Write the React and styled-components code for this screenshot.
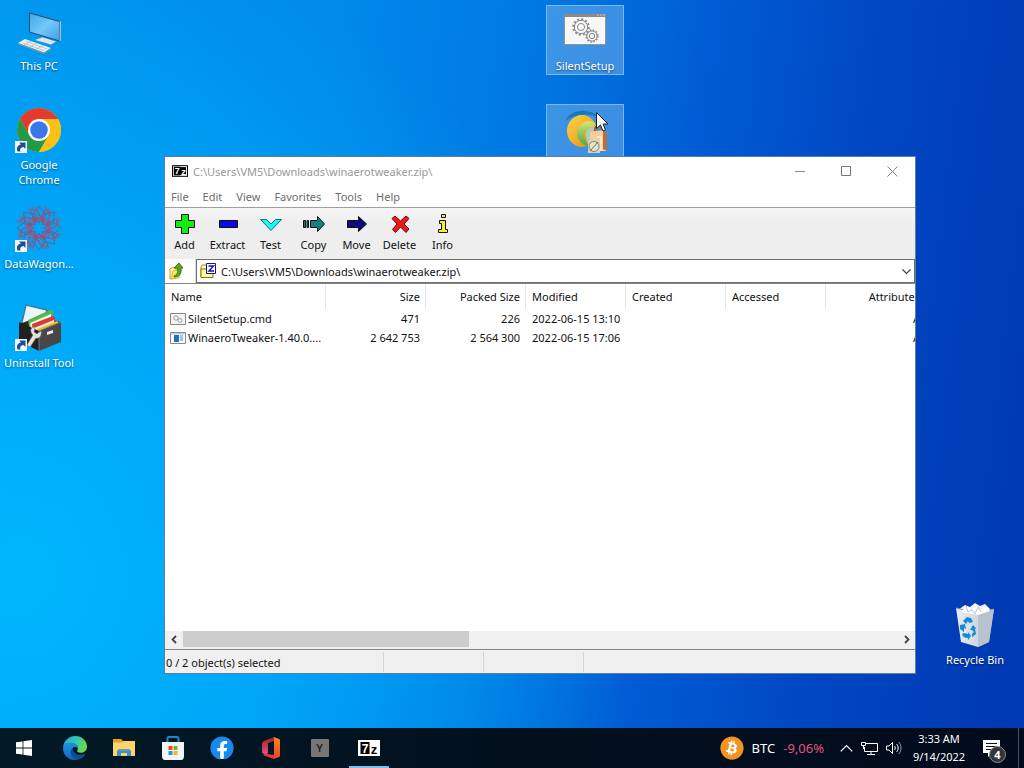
import React from 'react';
import styled, { createGlobalStyle } from 'styled-components';
import { FaFacebook } from 'react-icons/fa';
import { FaBitcoin } from 'react-icons/fa6';

const GlobalStyle = createGlobalStyle`
  * { box-sizing: border-box; }
  html, body, #root { height: 100%; margin: 0; }
  body { overflow: hidden; font-family: "Noto Sans", "Open Sans", sans-serif; font-size: 11px; line-height: 15px; }
  button, input { font: inherit; color: inherit; margin: 0; padding: 0; border: 0; background: none; }
  svg { display: block; flex: none; }
`;

const Screen = styled.div`
  height: 100vh;
  display: flex;
  flex-direction: column;
  background:
    radial-gradient(ellipse 60% 85% at 2% 75%, rgba(0, 186, 255, 0.9) 0%, rgba(0, 180, 255, 0.6) 50%, rgba(0, 160, 250, 0) 100%),
    linear-gradient(97deg, #0094ec 0%, #008aea 30%, #0076e0 50%, #005cd4 64%, #0046c2 80%, #0038b0 100%);
`;

const Desktop = styled.main`
  position: relative;
  flex: 1;
  min-height: 0;
`;

const IconColumn = styled.div`
  position: absolute;
  top: ${(p) => p.$top || 'auto'};
  left: ${(p) => p.$left || 'auto'};
  right: ${(p) => p.$right || 'auto'};
  bottom: ${(p) => p.$bottom || 'auto'};
  display: grid;
  grid-auto-rows: minmax(${(p) => (p.$single ? '70px' : '99px')}, auto);
  align-items: start;
`;

const DesktopButton = styled.button`
  width: 78px;
  min-height: 70px;
  padding-top: 1px;
  display: flex;
  flex-direction: column;
  align-items: center;
  gap: 3px;
  border: 1px solid ${(p) => (p.$selected ? '#7ab8f2' : 'transparent')};
  background: ${(p) => (p.$selected ? 'rgba(120, 180, 235, 0.5)' : 'none')};
  color: #fff;
  text-shadow: 0 1px 2px rgba(0, 0, 0, 0.5);
`;

const Cursor = styled.svg`
  position: absolute;
  left: 595px;
  top: 111px;
`;

const Window = styled.section`
  position: absolute;
  left: 164px;
  right: 108px;
  top: 156px;
  bottom: 54px;
  display: flex;
  flex-direction: column;
  background: #fff;
  border: 1px solid #5d7f9c;
  color: #111;
`;

const TitleBar = styled.header`
  display: flex;
  align-items: center;
  height: 30px;
  padding: 0 0 2px 7px;
  color: #999;
`;

const Title = styled.h1`
  flex: 1;
  margin: 0 0 0 5px;
  font-size: 11px;
  font-weight: 400;
`;

const CaptionButton = styled.button`
  width: 46px;
  height: 28px;
  display: grid;
  place-items: center;
`;

const MenuBar = styled.nav`
  display: flex;
  height: 21px;
  padding: 0 0 2px 6px;
  gap: 14px;
  color: #6d6d6d;
  border-bottom: 1px solid #a0a0a0;
`;

const Toolbar = styled.div`
  display: flex;
  height: 51px;
  padding: 6px 0;
  background: linear-gradient(#f6f6f6, #eeeeee 30%);
`;

const ToolButton = styled.button`
  width: 43px;
  margin-left: ${(p) => (p.$first ? '-2px' : '0')};
  display: flex;
  flex-direction: column;
  align-items: center;
  gap: 3px;
  line-height: 16px;
`;

const AddressRow = styled.div`
  display: flex;
  height: 24px;
`;

const UpButton = styled.button`
  width: 31px;
  padding-left: 4px;
  border-right: 1px solid #ddd;
`;

const Combo = styled.div`
  flex: 1;
  display: flex;
  align-items: center;
  padding-left: 3px;
  gap: 5px;
  border: 1px solid #6e6e6e;
`;

const PathInput = styled.input`
  flex: 1;
  min-width: 0;
  outline: 0;
`;

const DropButton = styled.button`
  width: 15px;
  height: 20px;
  display: grid;
  place-items: center;
`;

const FileList = styled.div`
  flex: 1;
  min-height: 0;
  display: flex;
  flex-direction: column;
  border-top: 1px solid #82868a;
  border-bottom: 1px solid #82868a;
`;

const ListView = styled.div`
  flex: 1;
  overflow: hidden;
`;

const Table = styled.table`
  width: 761px;
  table-layout: fixed;
  border-collapse: separate;
  border-spacing: 0;
`;

const HeadCell = styled.th`
  width: ${(p) => p.$width};
  height: 25px;
  padding: 0 5px 0 6px;
  font-weight: 400;
  text-align: ${(p) => p.$align};
  border-right: 1px solid #e5e5e5;
`;

const Cell = styled.td`
  height: 19px;
  padding: 0 6px;
  white-space: nowrap;
  text-align: ${(p) => p.$align};
  &:first-child { padding: 0 0 0 5px; }
`;

const FileName = styled.span`
  display: flex;
  align-items: center;
  gap: 2px;
`;

const ScrollBar = styled.div`
  display: flex;
  height: 18px;
  padding-bottom: 2px;
  background: #f0f0f0;
`;

const ScrollArrow = styled.button`
  width: 18px;
  display: grid;
  place-items: center;
`;

const ScrollTrack = styled.div`
  flex: 1;
`;

const ScrollThumb = styled.div`
  width: 40%;
  height: 16px;
  background: #cdcdcd;
`;

const StatusBar = styled.footer`
  display: flex;
  height: 23px;
  padding: 2px 0 1px;
  background: #f0f0f0;
`;

const StatusCell = styled.div`
  width: ${(p) => p.$width};
  padding: 3px 0 0 1px;
  border-right: 1px solid #d4d4d4;
`;

const Taskbar = styled.footer`
  display: flex;
  height: 40px;
  background: linear-gradient(90deg, #021a26, #02101e 50%, #020b1c);
  color: #fff;
`;

const TaskButton = styled.button`
  width: ${(p) => (p.$start ? '50px' : '49px')};
  display: grid;
  place-items: center;
  padding-right: ${(p) => (p.$start ? '2px' : '0')};
  background: ${(p) => (p.$active ? 'linear-gradient(#84bdea, #84bdea) center bottom / 40px 2px no-repeat' : 'none')};
`;

const LetterTile = styled.span`
  width: 18px;
  height: 18px;
  border-radius: 1px;
  background: #777675;
  color: #26221f;
  font-size: 11px;
  font-weight: 600;
  line-height: 18px;
`;

const Tray = styled.div`
  margin-left: auto;
  display: flex;
  align-items: center;
`;

const Ticker = styled.button`
  display: flex;
  align-items: center;
  gap: 8px;
  font-size: 13px;
`;

const Change = styled.span`
  color: #e2557c;
`;

const TrayIcons = styled.div`
  display: flex;
  align-items: center;
  gap: 8px;
  padding: 0 10px 0 16px;
`;

const TrayButton = styled.button`
  display: grid;
`;

const Clock = styled.button`
  width: 54px;
  font-size: 11px;
  line-height: 18px;
  white-space: nowrap;
`;

const Notifications = styled.button`
  position: relative;
  width: 53px;
  height: 40px;
  padding: 2px 0 0 17px;
  border-right: 1px solid #35566e;
  margin-right: 5px;
`;

const Badge = styled.span`
  position: absolute;
  left: 23px;
  top: 18px;
  width: 17px;
  height: 17px;
  border: 1px solid #8b9096;
  border-radius: 50%;
  background: #31363c;
  font-weight: 700;
  line-height: 15px;
`;

const Shortcut = () => (
  <g>
    <path d="M0 35h12v12H0z" fill="#f5f8fb" />
    <path d="M2.500 45.500c-1.500-4 .5-6.500 3.500-7L4 36.500h6.500V43l-2-2c-3 .5-4 2-3 4.500z" fill="#1d4d94" />
  </g>
);

const Icon48 = ({ children }) => <svg width="48" height="48" viewBox="0 0 48 48" aria-hidden="true">{children}</svg>;

const ThisPcIcon = () => (
  <Icon48>
    <defs>
      <linearGradient id="pc" x1="0" y1="0" x2="1" y2="1">
        <stop offset="0" stopColor="#3fa5ec" /><stop offset=".5" stopColor="#74c8fa" /><stop offset="1" stopColor="#3a9fea" />
      </linearGradient>
    </defs>
    <path d="M14.500 6L44.500 14.500V34L14.500 25z" fill="url(#pc)" stroke="#2c4a60" strokeWidth="1" />
    <path d="M45.200 14.500V34" stroke="#d5e3ec" />
    <path d="M27 30l8 2.500v3l-8-2z" fill="#9fb2be" />
    <path d="M20 33l7-2.500 14 4-5 3z" fill="#dfe6ea" />
    <path d="M3 36l7-4 26 9-7 4.500z" fill="#eef1f3" />
    <path d="M3 36l26 9.500 7-4.500v1.200L29 47 3 37.200z" fill="#8196a5" />
    <path d="M8 36.200l21 7.300M11 34.500l21 7.400M9 38l7-4M15 40l7-4M21 42.300l7-4" stroke="#a9b5bd" strokeWidth=".7" />
  </Icon48>
);

const ChromeIcon = () => (
  <Icon48>
    <circle cx="24" cy="24" r="22" fill="#fbc116" />
    <path d="M24 13h19a22 22 0 0 0-38.100 0L14.500 29.500z" fill="#e33b2e" />
    <path d="M4.950 13L14.500 29.500A11 11 0 0 0 33.500 29.500L24 46A22 22 0 0 1 4.950 13z" fill="#229a4a" />
    <path d="M43.050 13H24a11 11 0 0 1 9.500 16.500L24 46A22 22 0 0 0 43.050 13z" fill="#fbc116" />
    <circle cx="24" cy="24" r="11" fill="#fff" />
    <circle cx="24" cy="24" r="8.800" fill="#3b78e7" />
    <Shortcut />
  </Icon48>
);

const DataWagonIcon = () => (
  <Icon48>
    {[0, 45, 90, 135, 180, 225, 270, 315].map((a) => (
      <g key={a} transform={`rotate(${a} 24 23)`} fill="none" strokeWidth="1">
        <path d="M24 18l-7-8 7-9 7 9z" stroke="#55659f" />
        <path d="M19 15l-4-10h6l8 11M21 3l7 13" stroke="#965079" />
        <path d="M17 16h14l-7-6z" stroke="#b04a70" />
        <path d="M15 5l-2-2h8l3 6M29 4h5l-3 8" stroke="#6574a8" />
      </g>
    ))}
    <Shortcut />
  </Icon48>
);

const UninstallIcon = () => (
  <Icon48>
    <path d="M11 1l21 5-6 24L6 22z" fill="#eaf4fa" stroke="#377da2" strokeWidth="1.500" />
    <path d="M4 20l20-7 22 5-22 9z" fill="#292929" />
    <path d="M13 16l22-10 3 1v14L15 28z" fill="#54b948" />
    <path d="M15 19l21-9v12L17 30z" fill="#f3f6df" />
    <path d="M17 20l21-8 2 2v11L18 30z" fill="#d83a36" />
    <path d="M19 24l20-8v10L20 33z" fill="#f7efe7" />
    <path d="M22 25l20-8 2 2v9L24 34z" fill="#efbc28" />
    <path d="M4 18l20 9v20L4 37z" fill="#202020" />
    <path d="M24 27l22-9v20L24 47z" fill="#484646" />
    <path d="M24 27l22-9M24 27v20" stroke="#767373" />
    <path d="M32 28l6-2v3l-6 2z" fill="#ececec" />
    <path d="M12 41l6-10c-4-4-2-8 2-8l-1 5 3 2 4-3c1 5-2 8-5 7l-6 9z" fill="#e6e4df" stroke="#85817c" strokeWidth=".6" />
    <Shortcut />
  </Icon48>
);

const Gear = ({ x, y, r, teeth = 12 }) => (
  <g transform={`translate(${x} ${y})`} fill="none" stroke="#85898b">
    <circle r={r * 0.78} strokeWidth="1" />
    <circle r={r * 0.42} strokeWidth="1" />
    <circle r={r * 0.92} strokeWidth={r * 0.22} strokeDasharray={`${(r * 0.92 * Math.PI) / teeth} ${(r * 0.92 * Math.PI) / teeth}`} />
  </g>
);

const SetupIcon = () => (
  <Icon48>
    <path d="M3.500 7.500h41v30h-41z" fill="#f8f8f8" stroke="#96938d" />
    <path d="M3 7h42v3H3z" fill="#918980" />
    <path d="M36 8h2M39 8h2M42 8h2" stroke="#d4c9bc" />
    <Gear x={20} y={20} r={8.5} />
    <Gear x={31} y={29} r={6.5} />
  </Icon48>
);

const TweakerIcon = () => (
  <Icon48>
    <defs>
      <linearGradient id="tw" x1="0" y1="0" x2="1" y2="1">
        <stop offset="0" stopColor="#ffd548" /><stop offset=".6" stopColor="#efab22" /><stop offset="1" stopColor="#b98a16" />
      </linearGradient>
      <linearGradient id="tg" x1="0" y1="0" x2="0" y2="1">
        <stop offset="0" stopColor="#d9e56c" /><stop offset="1" stopColor="#47a552" />
      </linearGradient>
    </defs>
    <path d="M4 15C10 3 28 1 40 12 28 7 16 7 4 15z" fill="#127bb8" />
    <ellipse cx="21" cy="25" rx="15" ry="16" fill="url(#tw)" />
    <path d="M34 17c-9-5-19 2-18 12 1 6 6 10 12 11-5-6-6-12-3-16 2-2 5-3 8-2z" fill="url(#tg)" />
    <path d="M33 22c-6-2-11 4-6 15l7-3z" fill="#a9cfc0" />
    <path d="M29 26l13-2 3 3v18H29z" fill="#f4cf9b" />
    <path d="M42 24l4 3v18l-4-2z" fill="#b66f3f" />
    <path d="M34 25c0-6 7-8 8-1" fill="none" stroke="#c4502a" strokeWidth="2.500" />
    <path d="M27 34h12v13H27z" fill="#d7d1b6" />
    <circle cx="33" cy="40.500" r="5" fill="#e6e2cf" stroke="#8b866f" />
    <path d="M29 45l8-9" stroke="#6b705f" />
    <path d="M36 31h4v14" fill="none" stroke="#fff2d7" strokeWidth="1.500" />
  </Icon48>
);

const BinIcon = () => (
  <Icon48>
    <defs>
      <linearGradient id="bin" x1="0" y1="0" x2="1" y2="0">
        <stop offset="0" stopColor="#e8eef2" /><stop offset=".6" stopColor="#cdd7de" /><stop offset="1" stopColor="#8fa0b3" />
      </linearGradient>
    </defs>
    <path d="M7 9l7-5 5 2 5-4 5 3 5-2 8 8-3 6H9z" fill="#f0f3f5" />
    <path d="M5 7l22 5 16-4-5 33-11 5-17-5z" fill="url(#bin)" />
    <path d="M27 12l16-4-5 33-11 5z" fill="#b8c3cd" />
    <path d="M5 7l22 5 16-4" fill="none" stroke="#8698ab" />
    <path d="M10 11l5-6 6 4 4-5 5 5 6-3 3 4-12 4z" fill="#fff" />
    <path d="M15 5l2 6 4-2 3 4 3-7 3 5" fill="none" stroke="#b9c2cc" />
    <g fill="#1688d8">
      <path d="M12 20l4-4 4 1 2 4-4 1-1-2-2 3z" />
      <path d="M9 24l5-1 1 5-2-1v4l-4-3z" />
      <path d="M11 33l2-1 4 1v-2l3 4-3 4v-2c-3 0-5-1-6-4z" />
      <path d="M21 33l2-2-2-2h-2l3-5 3 3-1 1 1 5-4 3z" />
    </g>
  </Icon48>
);

const SevenZip = ({ large }) => (
  <svg width={large ? 22 : 16} height={large ? 16 : 12} viewBox="0 0 22 16" aria-label="7z">
    <rect width="22" height="16" fill={large ? '#fff' : '#000'} />
    <rect x="2" y="2" width="18" height="12" fill={large ? '#fff' : '#000'} stroke={large ? 'none' : '#fff'} strokeWidth="1.300" />
    <rect x="2.500" y="2" width="9" height="12" fill="#000" />
    <text x="7" y="12.500" textAnchor="middle" fontFamily="Liberation Sans" fontWeight="700" fontSize="12" fill="#fff">7</text>
    <text x="16" y="13.500" textAnchor="middle" fontFamily="Liberation Sans" fontWeight="700" fontSize="13" fill={large ? '#000' : '#fff'}>z</text>
  </svg>
);

const toolShapes = {
  Add: <path d="M8.500.5h7v6h6v7h-6v6h-7v-6h-6v-7h6z" fill="#12ee12" />,
  Extract: <path d="M3.500 6.500h18v7h-18z" fill="#0808ee" />,
  Test: <path d="M1.500 5.500h6L12 10l4.500-4.500h6L12 16.500z" fill="#20f4f4" stroke="#067878" />,
  Copy: <g fill="#168080"><path d="M1.500 6.500h2v7h-2zM5 6.500h1.500v7H5zM8.500 6.500h7v-4l7 7.500-7 7.500v-4h-7z" /></g>,
  Move: <path d="M2.500 6.500h11v-4l8 7.500-8 7.500v-4h-11z" fill="#100a80" />,
  Delete: <path d="M4 4.500l3-2.500 5.500 5L18 2l3 2.500-5 5.500 5 5-3 3.500-5.500-5.500-5 5.500-3-3 4.500-5.500z" fill="#f01818" stroke="#610b0b" />,
  Info: <path d="M10.500.500h4v3h-4zM8.500 6.500h6v9h2v3h-9v-3h3v-6h-2z" fill="#f4f424" />,
};

const ToolIcon = ({ name }) => (
  <svg width="24" height="20" viewBox="0 0 24 20" stroke="#111" aria-hidden="true">{toolShapes[name]}</svg>
);

const UpIcon = () => (
  <svg width="16" height="18" viewBox="0 0 16 18" aria-hidden="true">
    <path d="M1 7l4-2 2 2v9l-6 1z" fill="#fff2a2" stroke="#c8a72a" />
    <path d="M2 17l2-8 8-2-2 9z" fill="#ffe45f" stroke="#d2ab28" strokeWidth=".7" />
    <path d="M5 14c4-1 4-5 3-8H5l5-5 4 5h-2c1 6-2 9-7 9z" fill="#56a71b" stroke="#286414" strokeWidth=".8" />
  </svg>
);

const ArchiveIcon = () => (
  <svg width="16" height="16" viewBox="0 0 16 16" aria-hidden="true">
    <path d="M1 4l1-2h4l1 2v10H1z" fill="#ffffb2" stroke="#a18d22" />
    <path d="M1 6h12v8.500H1z" fill="#ffff9b" stroke="#7d731d" />
    <path d="M6.500.500h9v10h-9z" fill="#fff" stroke="#15159a" />
    <path d="M8.500 3h5L9 8h5" fill="none" stroke="#1515b6" strokeWidth="1.400" />
  </svg>
);

const CmdFileIcon = () => (
  <svg width="16" height="14" viewBox="0 0 16 14" aria-hidden="true">
    <path d="M.5 1.500h15v11H.5z" fill="#f4f4f4" stroke="#878787" />
    <circle cx="6" cy="6" r="2.200" fill="none" stroke="#a0a0a0" /><circle cx="10" cy="8.500" r="2" fill="none" stroke="#a0a0a0" />
  </svg>
);

const ExeFileIcon = () => (
  <svg width="16" height="14" viewBox="0 0 16 14" aria-hidden="true">
    <path d="M.5 1.500h15v11H.5z" fill="#fff" stroke="#838994" />
    <path d="M1 2h14v1.500H1z" fill="#c4cbd2" />
    <path d="M4 4h5v7H4z" fill="#1d71bd" /><path d="M10 5h3M10 7h3M10 9h3" stroke="#4785b9" />
  </svg>
);

const Chevron = ({ dir, size = 9, color = '#444', width = 1.2 }) => {
  const d = { left: 'M6 1L2.500 4.500 6 8', right: 'M3 1l3.500 3.500L3 8', down: 'M.5 2.500l4 4 4-4', up: 'M.5 6.500l4-4 4 4' }[dir];
  return <svg width={size} height={size} viewBox="0 0 9 9" fill="none" stroke={color} strokeWidth={width} aria-hidden="true"><path d={d} /></svg>;
};

const StartIcon = () => (
  <svg width="16" height="16" viewBox="0 0 16 16" fill="#fff" aria-hidden="true">
    <path d="M0 2.300L6.600 1.400v6.200H0zM7.400 1.300L16 0v7.600H7.400zM0 8.400h6.600v6.200L0 13.700zM7.400 8.400H16V16l-8.600-1.200z" />
  </svg>
);

const EdgeIcon = () => (
  <svg width="24" height="24" viewBox="0 0 24 24" aria-hidden="true">
    <defs>
      <linearGradient id="e1" x1="0" y1="0" x2="1" y2=".4"><stop offset="0" stopColor="#22a7dc" /><stop offset=".55" stopColor="#35c6b4" /><stop offset="1" stopColor="#68d84b" /></linearGradient>
      <linearGradient id="e2" x1="0" y1="0" x2="0" y2="1"><stop offset="0" stopColor="#1b94df" /><stop offset="1" stopColor="#1265c0" /></linearGradient>
    </defs>
    <path d="M.2 11C.8 5 6 .1 12.300.1 19 .1 24 5 24 10.500c0 4-3 6.300-6.300 6.300-2.900 0-4.200-1.300-3.300-2.600 2-3-1-7-5.200-7C5 7.200 1.400 8.800.2 11z" fill="url(#e1)" />
    <path d="M.1 12C.3 7.500 4.500 6.500 8.500 6.800c4 .2 7 3 6.500 6-1-2-4-2.500-5.500-.6C7 15.500 9 21 15 23.500 6.500 25.500-.3 19.500.1 12z" fill="url(#e2)" />
    <path d="M9.300 12.200C6 16 8 22 13.500 23.900c3.900-.2 7.500-2.500 8.900-5.600.2-.5-.2-.7-.6-.5-5 2.300-10.500.6-11.600-3.200-.3-1-.2-1.800-.9-2.400z" fill="#124b94" />
  </svg>
);

const ExplorerIcon = () => (
  <svg width="22" height="18" viewBox="0 0 22 18" aria-hidden="true">
    <path d="M0 0h8l2 2h12v4H0z" fill="#dfa227" />
    <path d="M0 3.500h9L11 2h11v15H0z" fill="#fbd465" />
    <path d="M4 17v-5l2-2h10l2 2v5h-4v-3H8v3z" fill="#438ec4" />
    <path d="M4 12l2-2h10l2 2z" fill="#5a9fce" />
  </svg>
);

const StoreIcon = () => (
  <svg width="24" height="24" viewBox="0 0 24 24" aria-hidden="true">
    <path d="M6.500 7V2.500c0-1 .5-1.500 1.500-1.500h8c1 0 1.500.5 1.500 1.500V7" fill="none" stroke="#2384c6" strokeWidth="2" />
    <path d="M1 6h22v14c0 2.500-1 4-3 4H4c-2 0-3-1.500-3-4z" fill="#f2f5f7" />
    <path d="M7.500 10h4v4h-4z" fill="#e84d29" /><path d="M12.500 10h4v4h-4z" fill="#76b82a" />
    <path d="M7.500 15h4v4h-4z" fill="#229bd5" /><path d="M12.500 15h4v4h-4z" fill="#f7b719" />
  </svg>
);

const FacebookIcon = () => (
  <svg width="24" height="24" viewBox="0 0 24 24" aria-hidden="true">
    <circle cx="12" cy="12" r="11" fill="#fff" />
    <FaFacebook x="0" y="0" size={24} color="#168af0" />
  </svg>
);

const OfficeIcon = () => (
  <svg width="20" height="22" viewBox="0 0 20 22" aria-hidden="true">
    <defs>
      <linearGradient id="of" x1="0" y1="0" x2="0" y2="1"><stop offset="0" stopColor="#a41f1d" /><stop offset="1" stopColor="#e3508e" /></linearGradient>
      <linearGradient id="og" x1="0" y1="0" x2="0" y2="1"><stop offset="0" stopColor="#ff871f" /><stop offset="1" stopColor="#e64422" /></linearGradient>
    </defs>
    <path d="M13 0L3 4C2 4.500 1 5.500 1 7v9l4 1.500L7 16V6l6-2z" fill="url(#of)" />
    <path d="M13 0l5 2c.7.3 1 .8 1 1.500v15c0 .8-.3 1.200-1 1.500l-5 2z" fill="url(#og)" />
    <path d="M2 17l4 0 7 1v4L3 18.500z" fill="#dc3d37" />
  </svg>
);

const NetworkIcon = () => (
  <svg width="17" height="15" viewBox="0 0 17 15" fill="none" stroke="#fff" aria-hidden="true">
    <path d="M5 2.500h11.500v8H3.500V6M10 10.500v3M6 13.500h8M.5 1.500h4v3h-4zM2.500 5v3" />
  </svg>
);

const VolumeIcon = () => (
  <svg width="16" height="14" viewBox="0 0 16 14" fill="none" stroke="#fff" aria-hidden="true">
    <path d="M.5 5h2.500l3.500-3.500v11L3 9H.5z" /><path d="M8.500 5c1 1 1 3 0 4" /><path d="M10.500 3c2.200 2 2.200 6 0 8" />
    <path d="M12.800 1c3 3.300 3 8.700 0 12" stroke="#8e98a4" />
  </svg>
);

const columns = [
  ['Name', '161px', 'left'], ['Size', '100px', 'right'], ['Packed Size', '100px', 'right'], ['Modified', '100px', 'left'],
  ['Created', '100px', 'left'], ['Accessed', '100px', 'left'], ['Attributes', '100px', 'right'],
];

const files = [
  { icon: <CmdFileIcon />, cells: ['SilentSetup.cmd', '471', '226', '2022-06-15 13:10', '', '', 'A'] },
  { icon: <ExeFileIcon />, cells: ['WinaeroTweaker-1.40.0....', '2 642 753', '2 564 300', '2022-06-15 17:06', '', '', 'A'] },
];

const path = 'C:\\Users\\VM5\\Downloads\\winaerotweaker.zip\\';

const DesktopIcon = ({ icon, label, selected, name }) => (
  <DesktopButton type="button" $selected={selected} aria-label={name}>
    {icon}
    {label && <span>{label}</span>}
  </DesktopButton>
);

function ArchiveWindow() {
  return (
    <Window>
      <TitleBar>
        <SevenZip />
        <Title>{path}</Title>
        <CaptionButton type="button" aria-label="Minimize">
          <svg width="10" height="10" stroke="#888"><path d="M0 5.500h10" /></svg>
        </CaptionButton>
        <CaptionButton type="button" aria-label="Maximize">
          <svg width="10" height="10" fill="none" stroke="#777"><path d="M.5.5h9v9h-9z" /></svg>
        </CaptionButton>
        <CaptionButton type="button" aria-label="Close">
          <svg width="11" height="11" stroke="#888"><path d="M.5.5l10 10M10.500.5l-10 10" /></svg>
        </CaptionButton>
      </TitleBar>
      <MenuBar>
        {['File', 'Edit', 'View', 'Favorites', 'Tools', 'Help'].map((m) => <button type="button" key={m}>{m}</button>)}
      </MenuBar>
      <Toolbar>
        {Object.keys(toolShapes).map((name, i) => (
          <ToolButton type="button" key={name} $first={i === 0}><ToolIcon name={name} />{name}</ToolButton>
        ))}
      </Toolbar>
      <AddressRow>
        <UpButton type="button" aria-label="Up one level"><UpIcon /></UpButton>
        <Combo>
          <ArchiveIcon />
          <PathInput aria-label="Address" defaultValue={path} />
          <DropButton type="button" aria-label="Show addresses"><Chevron dir="down" /></DropButton>
        </Combo>
      </AddressRow>
      <FileList>
        <ListView>
          <Table>
            <thead>
              <tr>{columns.map(([label, width, align]) => <HeadCell key={label} $width={width} $align={align}>{label}</HeadCell>)}</tr>
            </thead>
            <tbody>
              {files.map((f) => (
                <tr key={f.cells[0]}>
                  {f.cells.map((c, i) => (
                    <Cell key={columns[i][0]} $align={columns[i][2]}>{i === 0 ? <FileName>{f.icon}{c}</FileName> : c}</Cell>
                  ))}
                </tr>
              ))}
            </tbody>
          </Table>
        </ListView>
        <ScrollBar>
          <ScrollArrow type="button" aria-label="Scroll left"><Chevron dir="left" width={1.8} /></ScrollArrow>
          <ScrollTrack><ScrollThumb /></ScrollTrack>
          <ScrollArrow type="button" aria-label="Scroll right"><Chevron dir="right" width={1.8} /></ScrollArrow>
        </ScrollBar>
      </FileList>
      <StatusBar>
        <StatusCell $width="219px">0 / 2 object(s) selected</StatusCell>
        <StatusCell $width="100px" />
        <StatusCell $width="100px" />
      </StatusBar>
    </Window>
  );
}

export default function App() {
  return (
    <Screen>
      <GlobalStyle />
      <Desktop>
        <IconColumn $top="5px" $left="0">
          <DesktopIcon icon={<ThisPcIcon />} label="This PC" />
          <DesktopIcon icon={<ChromeIcon />} label="Google Chrome" />
          <DesktopIcon icon={<DataWagonIcon />} label="DataWagon..." />
          <DesktopIcon icon={<UninstallIcon />} label="Uninstall Tool" />
        </IconColumn>
        <IconColumn $top="5px" $left="546px">
          <DesktopIcon icon={<SetupIcon />} label="SilentSetup" selected />
          <DesktopIcon icon={<TweakerIcon />} name="WinaeroTweaker" selected />
        </IconColumn>
        <IconColumn $right="10px" $bottom="59px" $single>
          <DesktopIcon icon={<BinIcon />} label="Recycle Bin" />
        </IconColumn>
        <ArchiveWindow />
        <Cursor width="14" height="22" viewBox="0 0 14 22" aria-hidden="true">
          <path d="M1.500 1.500v16l4-3.500 2.500 6 2.500-1-2.500-6H13z" fill="#fff" stroke="#222" />
        </Cursor>
      </Desktop>
      <Taskbar>
        <TaskButton type="button" $start aria-label="Start"><StartIcon /></TaskButton>
        <TaskButton type="button" aria-label="Edge"><EdgeIcon /></TaskButton>
        <TaskButton type="button" aria-label="File Explorer"><ExplorerIcon /></TaskButton>
        <TaskButton type="button" aria-label="Store"><StoreIcon /></TaskButton>
        <TaskButton type="button" aria-label="Facebook"><FacebookIcon /></TaskButton>
        <TaskButton type="button" aria-label="Office"><OfficeIcon /></TaskButton>
        <TaskButton type="button"><LetterTile>Y</LetterTile></TaskButton>
        <TaskButton type="button" $active aria-label="7-Zip"><SevenZip large /></TaskButton>
        <Tray>
          <Ticker type="button">
            <svg width="24" height="24" viewBox="0 0 24 24" aria-hidden="true">
              <circle cx="12" cy="12" r="10" fill="#fff" /><FaBitcoin size={24} color="#f39322" />
            </svg>
            BTC <Change>-9,06%</Change>
          </Ticker>
          <TrayIcons>
            <TrayButton type="button" aria-label="Show hidden icons"><Chevron dir="up" size={13} color="#fff" width={0.9} /></TrayButton>
            <TrayButton type="button" aria-label="Network"><NetworkIcon /></TrayButton>
            <TrayButton type="button" aria-label="Volume"><VolumeIcon /></TrayButton>
          </TrayIcons>
          <Clock type="button">3:33 AM<br />9/14/2022</Clock>
          <Notifications type="button" aria-label="Notifications">
            <svg width="17" height="18" viewBox="0 0 17 18" aria-hidden="true">
              <path d="M0 0h17v13H9l-4 4v-4H0z" fill="#fff" /><path d="M3 3.500h11M3 6.500h11M3 9.500h7" stroke="#071224" />
            </svg>
            <Badge>4</Badge>
          </Notifications>
        </Tray>
      </Taskbar>
    </Screen>
  );
}
